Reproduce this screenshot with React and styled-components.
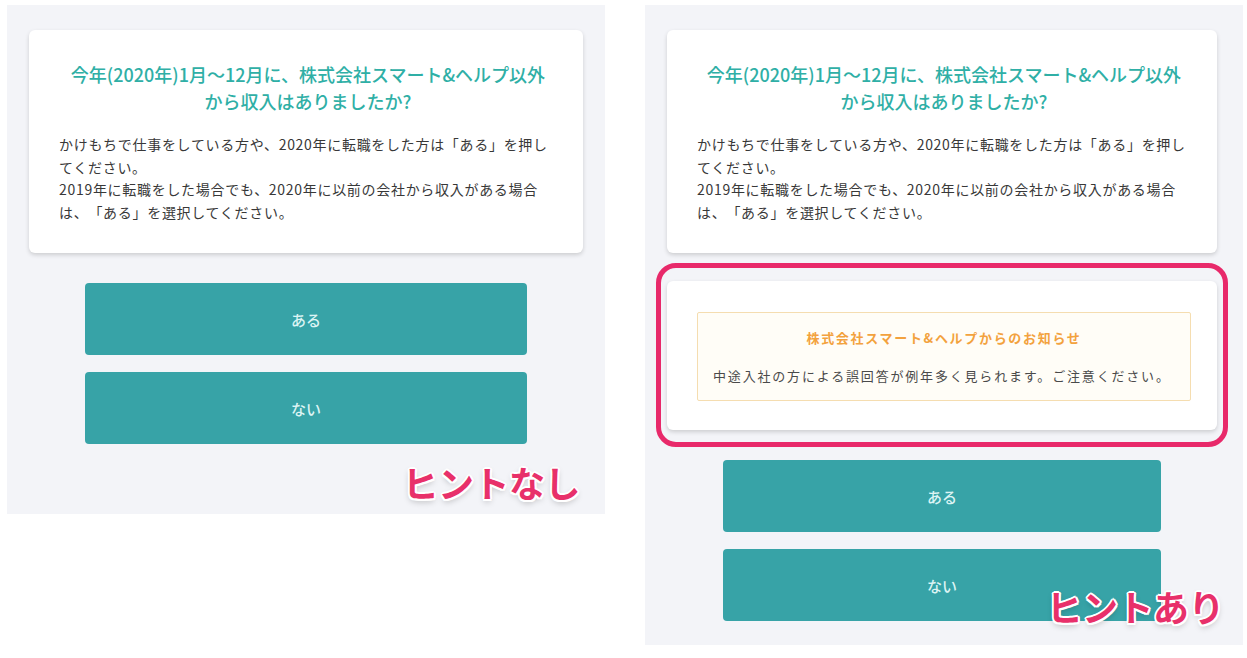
import styled, { createGlobalStyle } from "styled-components";

const GlobalStyle = createGlobalStyle`
    body {
        margin: 0;
        background: #ffffff;
        font-family: "Noto Sans CJK JP", "Noto Sans", sans-serif;
    }
`;

const Page = styled.div`
    display: flex;
    align-items: flex-start;
    gap: 40px;
    padding: 5px 4px 0 7px;
`;

const Panel = styled.div`
    position: relative;
    width: 598px;
    box-sizing: border-box;
    background: #f3f4f8;
    padding: 25px ${props => props.$side}px ${props => props.$bottom}px 22px;
    display: flex;
    flex-direction: column;
`;

const Card = styled.div`
    background: #ffffff;
    border-radius: 6px;
    box-shadow: 0 2px 4px rgba(0, 0, 0, 0.16);
    padding: 31px 26px 30px 30px;
`;

const Title = styled.h2`
    margin: 0 0 18px;
    text-align: center;
    color: #2fafa6;
    font-size: 18px;
    font-weight: 500;
    line-height: 27px;
`;

const Desc = styled.p`
    margin: 0;
    color: #383838;
    font-size: 14px;
    letter-spacing: 0.05em;
    line-height: 22.5px;
    text-spacing-trim: space-all;
    white-space: nowrap;
`;

const HintFrame = styled.div`
    margin: 10px -11px 13px;
    padding: 13px 6px 12px;
    border: 5px solid #e8296a;
    border-radius: 20px;
`;

const HintCard = styled.div`
    background: #ffffff;
    border-radius: 6px;
    box-shadow: 0 2px 4px rgba(0, 0, 0, 0.16);
    padding: 31px 26px 29px 30px;
`;

const Notice = styled.div`
    background: #fffdf7;
    border: 1px solid #f5ddb0;
    border-radius: 2px;
    padding: 15px 15px 14px;
    display: flex;
    flex-direction: column;
    gap: 18px;
`;

const NoticeTitle = styled.div`
    text-align: center;
    color: #f3a23e;
    font-size: 13px;
    font-weight: 700;
    letter-spacing: 0.13em;
    line-height: 20px;
`;

const NoticeText = styled.div`
    color: #4a4a4a;
    font-size: 13px;
    letter-spacing: 0.14em;
    line-height: 20px;
    white-space: nowrap;
`;

const Buttons = styled.div`
    display: flex;
    flex-direction: column;
    gap: 17px;
    margin: ${props => props.$top}px 56px 0;
`;

const AnswerButton = styled.button`
    height: 72px;
    border: none;
    border-radius: 4px;
    background: #37a3a7;
    color: #dcf4f4;
    font-family: inherit;
    font-size: 15px;
    font-weight: 500;
    cursor: pointer;
`;

const Label = styled.div`
    position: absolute;
    right: ${props => props.$right}px;
    bottom: ${props => props.$bottom}px;
    color: #e8306a;
    font-size: 36px;
    font-weight: 700;
    line-height: 1;
    letter-spacing: -0.5px;
    text-shadow:
        2px 0 0 #fff, -2px 0 0 #fff, 0 2px 0 #fff, 0 -2px 0 #fff,
        1.5px 1.5px 0 #fff, -1.5px 1.5px 0 #fff, 1.5px -1.5px 0 #fff, -1.5px -1.5px 0 #fff,
        0 3px 6px rgba(0, 0, 0, 0.25);
`;

const Question = () => (
    <Card>
        <Title>
            今年(2020年)1月〜12月に、株式会社スマート&ヘルプ以外
            <br />
            から収入はありましたか?
        </Title>
        <Desc>
            かけもちで仕事をしている方や、2020年に転職をした方は「ある」を押し
            <br />
            てください。
            <br />
            2019年に転職をした場合でも、2020年に以前の会社から収入がある場合
            <br />
            は、「ある」を選択してください。
        </Desc>
    </Card>
);

const Answers = ({ top }) => (
    <Buttons $top={top}>
        <AnswerButton>ある</AnswerButton>
        <AnswerButton>ない</AnswerButton>
    </Buttons>
);

const App = () => {
    return (
        <>
            <GlobalStyle />
            <Page>
                <Panel $side={22} $bottom={70}>
                    <Question />
                    <Answers top={30} />
                    <Label $right={25} $bottom={14}>ヒントなし</Label>
                </Panel>
                <Panel $side={26} $bottom={24}>
                    <Question />
                    <HintFrame>
                        <HintCard>
                            <Notice>
                                <NoticeTitle>株式会社スマート&ヘルプからのお知らせ</NoticeTitle>
                                <NoticeText>中途入社の方による誤回答が例年多く見られます。ご注意ください。</NoticeText>
                            </Notice>
                        </HintCard>
                    </HintFrame>
                    <Answers top={0} />
                    <Label $right={19} $bottom={21}>ヒントあり</Label>
                </Panel>
            </Page>
        </>
    );
};

export default App;
